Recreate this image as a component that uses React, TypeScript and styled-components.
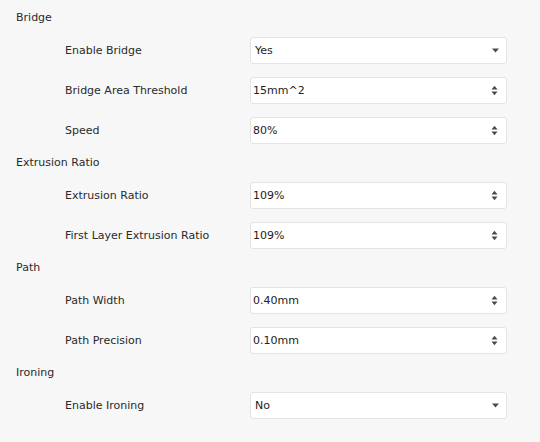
import React from "react";
import styled, { createGlobalStyle } from "styled-components";

const Global = createGlobalStyle`
  html, body {
    margin: 0;
    padding: 0;
    background: #f7f7f7;
  }
  body {
    font-family: "DejaVu Sans", "Liberation Sans", sans-serif;
    font-size: 11px;
    color: #2b2b2b;
    -webkit-font-smoothing: antialiased;
  }
`;

const Page = styled.div`
  width: 540px;
  height: 442px;
  padding-top: 5px;
  box-sizing: border-box;
  background: #f7f7f7;
  overflow: hidden;
`;

const Section = styled.section`
  display: flex;
  flex-direction: column;
`;

const SectionTitle = styled.div`
  height: 25px;
  line-height: 25px;
  padding-left: 16px;
  color: #2a2a2a;
`;

const Row = styled.div`
  display: flex;
  align-items: center;
  height: 40px;
`;

const Label = styled.div`
  flex: 0 0 250px;
  padding-left: 65px;
  box-sizing: border-box;
  color: #2a2a2a;
  white-space: nowrap;
`;

const Field = styled.div<{ $kind: "select" | "number" }>`
  flex: 0 0 257px;
  height: 27px;
  box-sizing: border-box;
  display: flex;
  align-items: center;
  justify-content: space-between;
  background: #ffffff;
  border: 1px solid #e4e4e4;
  border-radius: 3px;
  padding-left: ${(p) => (p.$kind === "select" ? "4px" : "2px")};
  padding-right: ${(p) => (p.$kind === "select" ? "7px" : "8px")};
  color: #222;
`;

const Value = styled.span`
  line-height: 1;
`;

const DownArrow = () => (
  <svg width="7" height="5" viewBox="0 0 7 5">
    <path d="M0 0.5 L7 0.5 L3.5 4.5 Z" fill="#4a4a4a" />
  </svg>
);

const Spinner = () => (
  <svg width="7" height="11" viewBox="0 0 7 11">
    <path d="M0.5 4.5 L6.5 4.5 L3.5 0.8 Z" fill="#4a4a4a" />
    <path d="M0.5 6.5 L6.5 6.5 L3.5 10.2 Z" fill="#4a4a4a" />
  </svg>
);

type Item = { label: string; value: string; kind: "select" | "number" };
type Group = { title: string; items: Item[] };

const groups: Group[] = [
  {
    title: "Bridge",
    items: [
      { label: "Enable Bridge", value: "Yes", kind: "select" },
      { label: "Bridge Area Threshold", value: "15mm^2", kind: "number" },
      { label: "Speed", value: "80%", kind: "number" },
    ],
  },
  {
    title: "Extrusion Ratio",
    items: [
      { label: "Extrusion Ratio", value: "109%", kind: "number" },
      { label: "First Layer Extrusion Ratio", value: "109%", kind: "number" },
    ],
  },
  {
    title: "Path",
    items: [
      { label: "Path Width", value: "0.40mm", kind: "number" },
      { label: "Path Precision", value: "0.10mm", kind: "number" },
    ],
  },
  {
    title: "Ironing",
    items: [{ label: "Enable Ironing", value: "No", kind: "select" }],
  },
];

export default function App() {
  return (
    <>
      <Global />
      <Page>
        {groups.map((g) => (
          <Section key={g.title}>
            <SectionTitle>{g.title}</SectionTitle>
            {g.items.map((it) => (
              <Row key={it.label}>
                <Label>{it.label}</Label>
                <Field $kind={it.kind}>
                  <Value>{it.value}</Value>
                  {it.kind === "select" ? <DownArrow /> : <Spinner />}
                </Field>
              </Row>
            ))}
          </Section>
        ))}
      </Page>
    </>
  );
}
